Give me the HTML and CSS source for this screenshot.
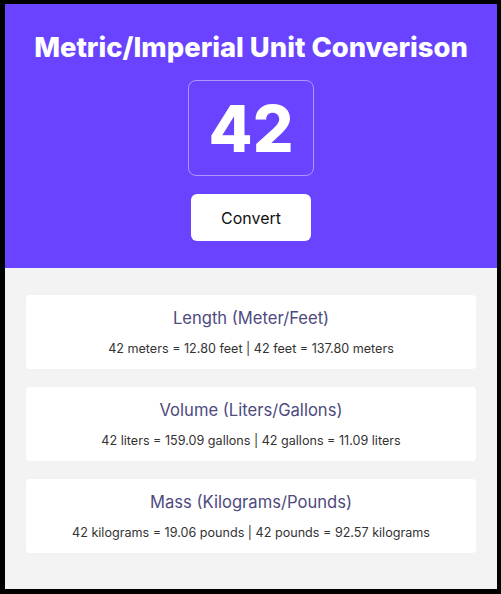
FILE: index.html
```html
<!DOCTYPE html>
<html lang="en">
  <head>
    <meta charset="UTF-8" />
    <meta name="viewport" content="width=device-width, initial-scale=1.0" />
    <title>Metric/Imperial Unit Converison</title>
    <link rel="stylesheet" href="styles.css">
  </head>
  <body>
    <div class="app">
      <header class="hero">
        <h1>Metric/Imperial Unit Converison</h1>
        <input type="text" id="amount" class="amount" value="42" />
        <button id="convert" class="convert-btn">Convert</button>
      </header>

      <main class="results">
        <div class="card">
          <h2>Length (Meter/Feet)</h2>
          <p id="length">42 meters = 12.80 feet | 42 feet = 137.80 meters</p>
        </div>
        <div class="card">
          <h2>Volume (Liters/Gallons)</h2>
          <p id="volume">42 liters = 159.09 gallons | 42 gallons = 11.09 liters</p>
        </div>
        <div class="card">
          <h2>Mass (Kilograms/Pounds)</h2>
          <p id="mass">42 kilograms = 19.06 pounds | 42 pounds = 92.57 kilograms</p>
        </div>
      </main>
    </div>
  </body>
</html>
```

FILE: styles.css
```css
* {
  box-sizing: border-box;
}

html,
body {
  margin: 0;
  height: 100%;
}

body {
  font-family: Inter, "Noto Sans", sans-serif;
  background: #000;
}

.app {
  height: 100%;
  border-style: solid;
  border-color: #000;
  border-width: 4px 4px 5px 5px;
  display: flex;
  flex-direction: column;
  background: #f3f3f3;
}

.hero {
  background: #6943ff;
  height: 264px;
  display: flex;
  flex-direction: column;
  align-items: center;
  padding-top: 27px;
}

h1 {
  margin: 0;
  color: #fff;
  font-size: 27.4px;
  font-weight: 800;
  line-height: 32px;
}

.amount {
  margin-top: 17px;
  width: 126px;
  height: 96px;
  background: transparent;
  border: 1px solid rgba(255, 255, 255, 0.45);
  border-radius: 8px;
  color: #fff;
  font-family: inherit;
  font-size: 64px;
  font-weight: 800;
  text-align: center;
  outline: none;
}

.convert-btn {
  margin-top: 18px;
  width: 120px;
  height: 47px;
  background: #fff;
  border: none;
  border-radius: 6px;
  font-family: inherit;
  font-size: 16px;
  color: #111;
  cursor: pointer;
}

.results {
  flex: 1;
  padding: 27px 21px 0;
  display: flex;
  flex-direction: column;
  gap: 18px;
}

.card {
  background: #fff;
  border-radius: 4px;
  height: 74px;
  text-align: center;
  padding-top: 13px;
}

.card h2 {
  margin: 0;
  font-size: 16.6px;
  font-weight: 400;
  color: #4e4a7e;
  line-height: 20px;
}

.card p {
  margin: 13px 0 0;
  font-size: 12.6px;
  color: #333;
  line-height: 16px;
}
```
